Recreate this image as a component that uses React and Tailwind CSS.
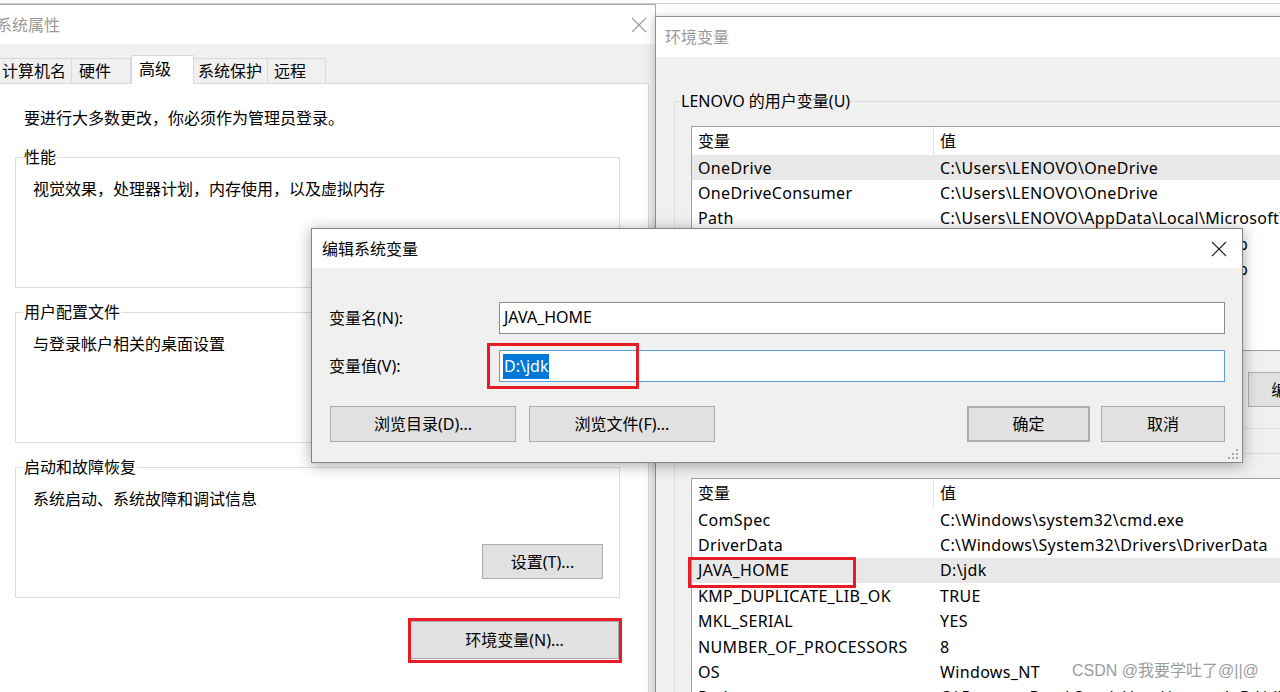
import React from "react";

// 用户变量 / 系统变量 rows
const userVars = [
  ["OneDrive", "C:\\Users\\LENOVO\\OneDrive", true],
  ["OneDriveConsumer", "C:\\Users\\LENOVO\\OneDrive"],
  ["Path", "C:\\Users\\LENOVO\\AppData\\Local\\Microsoft\\WindowsApps;"],
  ["TEMP", "C:\\Users\\LENOVO\\AppData\\Local\\Temp"],
  ["TMP", "C:\\Users\\LENOVO\\AppData\\Local\\Temp"],
  ["", ""],
  ["", ""],
  ["", ""],
];

const sysVars = [
  ["ComSpec", "C:\\Windows\\system32\\cmd.exe"],
  ["DriverData", "C:\\Windows\\System32\\Drivers\\DriverData"],
  ["JAVA_HOME", "D:\\jdk", true],
  ["KMP_DUPLICATE_LIB_OK", "TRUE"],
  ["MKL_SERIAL", "YES"],
  ["NUMBER_OF_PROCESSORS", "8"],
  ["OS", "Windows_NT"],
  ["Path", "C:\\ProgramData\\Oracle\\Java\\javapath;D:\\jdk\\bin"],
];

const CloseX = ({ color }) => (
  <svg width="16" height="16" viewBox="0 0 16 16" className="block">
    <path d="M1 1 L15 15 M15 1 L1 15" stroke={color} strokeWidth="1.1" fill="none" />
  </svg>
);

const WinButton = ({ children, className = "" }) => (
  <div
    className={
      "shrink-0 flex items-center justify-center border border-[#adadad] bg-[#e1e1e1] text-[16px] leading-[22px] text-black whitespace-nowrap " +
      className
    }
  >
    {children}
  </div>
);

const GroupBox = ({ label, text }) => (
  <fieldset className="border border-[#dcdcdc] pl-[7px] pr-[16px] pt-[10px] pb-[18px]">
    <legend className="px-[1px] leading-[22px]">{label}</legend>
    <div className="pl-[10px] leading-[22px]">{text}</div>
    <div className="flex justify-end mt-[34px]">
      <WinButton className="w-[121px] h-[35px]">设置(T)...</WinButton>
    </div>
  </fieldset>
);

const VarList = ({ rows, height }) => (
  <div className={"w-[640px] bg-white border border-[#a0a0a0] overflow-hidden " + height}>
    <div className="flex h-[28px] items-center">
      <div className="w-[242px] shrink-0 h-full pl-[6px] flex items-center border-r border-[#e5e5e5]">变量</div>
      <div className="pl-[6px]">值</div>
    </div>
    {rows.map(([name, value, selected], i) => (
      <div
        key={i}
        className={
          "flex h-[25.4px] items-center whitespace-nowrap tracking-[0.35px] " + (selected ? "bg-[#e8e8e8]" : "")
        }
      >
        <div className="w-[242px] shrink-0 pl-[6px]">{name}</div>
        <div className="pl-[6px]">{value}</div>
      </div>
    ))}
  </div>
);

export default function App() {
  return (
    <div className="relative w-[1280px] h-[692px] overflow-hidden bg-white text-black text-[16px] font-['Noto_Sans','Noto_Sans_CJK_SC',sans-serif]">
      {/* window edge behind everything */}
      <div className="h-[4px] border-b border-[#cfcfcf]" />

      {/* 系统属性 */}
      <div className="absolute left-[-10px] top-[4px] w-[666px] h-[700px] flex flex-col border border-[#aaaaaa] bg-[#f0f0f0]">
        <div className="shrink-0 h-[39px] flex items-center justify-between bg-white pl-[5px] pr-[8px]">
          <span className="text-[#9a9a9a] leading-[22px]">系统属性</span>
          <CloseX color="#9a9a9a" />
        </div>
        <div className="flex-1 flex flex-col pt-[11px] pl-[5px] pr-[6px]">
          <div className="shrink-0 flex items-end h-[28px]">
            <div className="w-[76px] h-[25px] pl-[5px] flex items-center border border-b-0 border-[#d9d9d9] bg-[#f0f0f0]">计算机名</div>
            <div className="w-[59px] h-[25px] pl-[7px] flex items-center border border-b-0 border-l-0 border-[#d9d9d9] bg-[#f0f0f0]">硬件</div>
            <div className="relative z-10 w-[63px] h-[29px] -mb-px pl-[7px] pb-[3px] flex items-center border border-b-0 border-[#d9d9d9] bg-white">高级</div>
            <div className="w-[74px] h-[25px] pl-[4px] flex items-center border border-b-0 border-l-0 border-[#d9d9d9] bg-[#f0f0f0]">系统保护</div>
            <div className="w-[58px] h-[25px] pl-[6px] flex items-center border border-b-0 border-l-0 border-[#d9d9d9] bg-[#f0f0f0]">远程</div>
          </div>
          <div className="flex-1 flex flex-col bg-white border border-[#d9d9d9] pt-[23px] pl-[18px] pr-[28px]">
            <div className="ml-[9px] leading-[22px]">要进行大多数更改，你必须作为管理员登录。</div>
            <div className="mt-[17px] flex flex-col gap-[13px]">
              <GroupBox label="性能" text="视觉效果，处理器计划，内存使用，以及虚拟内存" />
              <GroupBox label="用户配置文件" text="与登录帐户相关的桌面设置" />
              <GroupBox label="启动和故障恢复" text="系统启动、系统故障和调试信息" />
            </div>
            <div className="flex justify-end mt-[23px] pr-[1px]">
              <WinButton className="w-[209px] h-[38px]">环境变量(N)...</WinButton>
            </div>
          </div>
        </div>
      </div>

      {/* 环境变量 */}
      <div className="absolute left-[655px] top-[16px] w-[680px] h-[700px] flex flex-col border-l border-t border-[#8f8f8f] bg-[#f0f0f0] shadow-[-2px_0_8px_rgba(0,0,0,0.18)]">
        <div className="shrink-0 h-[40px] flex items-center bg-white pl-[9px]">
          <span className="text-[#9a9a9a] leading-[22px]">环境变量</span>
        </div>
        <div className="shrink-0 pl-[18px] pt-[33px]">
          <fieldset className="border border-[#dcdcdc] pl-[6px] pt-[14px] pb-[21px]">
            <legend className="leading-[22px]">LENOVO 的用户变量(U)</legend>
            <div className="pl-[10px]">
              <VarList rows={userVars} height="h-[225px]" />
              <div className="flex mt-[21px] ml-[444px] gap-[10px]">
                <WinButton className="w-[103px] h-[35px]">新建(N)...</WinButton>
                <WinButton className="w-[110px] h-[35px]">编辑(E)...</WinButton>
                <WinButton className="w-[103px] h-[35px]">删除(D)</WinButton>
              </div>
            </div>
          </fieldset>
          <fieldset className="mt-[13px] border border-[#dcdcdc] pl-[6px] pt-[14px] pb-[21px]">
            <legend className="leading-[22px]">系统变量(S)</legend>
            <div className="pl-[10px]">
              <VarList rows={sysVars} height="h-[260px]" />
            </div>
          </fieldset>
        </div>
      </div>

      {/* 编辑系统变量 */}
      <div className="absolute left-[311px] top-[228px] w-[932px] h-[235px] flex flex-col border border-[#858585] bg-[#f0f0f0] shadow-[0_2px_14px_rgba(0,0,0,0.35)]">
        <div className="shrink-0 h-[39px] flex items-center justify-between bg-white pl-[10px] pr-[15px]">
          <span className="leading-[22px]">编辑系统变量</span>
          <CloseX color="#222222" />
        </div>
        <div className="flex-1 flex flex-col pt-[34px] pl-[17px] pr-[17px]">
          <div className="flex items-center">
            <div className="w-[170px] shrink-0">变量名(N):</div>
            <div className="flex-1 h-[32px] flex items-center bg-white border border-[#8a8a8a] pl-[4px] pb-[3px]">JAVA_HOME</div>
          </div>
          <div className="flex items-center mt-[16px]">
            <div className="w-[170px] shrink-0">变量值(V):</div>
            <div className="flex-1 h-[32px] flex items-center bg-white border border-[#5a9fdc] pl-[3px]">
              <span className="bg-[#0078d7] text-white leading-[25px] px-[1px]">D:\jdk</span>
            </div>
          </div>
          <div className="flex items-center mt-[24px] pl-[1px]">
            <WinButton className="w-[186px] h-[36px]">浏览目录(D)...</WinButton>
            <WinButton className="w-[186px] h-[36px] ml-[13px]">浏览文件(F)...</WinButton>
            <div className="flex-1" />
            <WinButton className="w-[123px] h-[36px] border-2 border-[#0078d7]">确定</WinButton>
            <WinButton className="w-[124px] h-[36px] ml-[11px]">取消</WinButton>
          </div>
        </div>
        <svg width="12" height="12" viewBox="0 0 12 12" className="absolute right-[3px] bottom-[2px]">
          <g fill="#a8a8a8">
            <rect x="9" y="1" width="2" height="2" />
            <rect x="5" y="5" width="2" height="2" />
            <rect x="9" y="5" width="2" height="2" />
            <rect x="1" y="9" width="2" height="2" />
            <rect x="5" y="9" width="2" height="2" />
            <rect x="9" y="9" width="2" height="2" />
          </g>
        </svg>
      </div>

      {/* annotation boxes */}
      <div className="absolute left-[487px] top-[343px] w-[152px] h-[46px] border-[3px] border-[#e81c24]" />
      <div className="absolute left-[408px] top-[618px] w-[214px] h-[45px] border-[3px] border-[#e81c24]" />
      <div className="absolute left-[688px] top-[557px] w-[168px] h-[31px] border-[3px] border-[#e81c24]" />

      {/* watermark */}
      <div className="absolute left-[1072px] top-[660px] text-[16px] leading-[22px] text-[#9c9c9c] whitespace-nowrap font-['Liberation_Sans','Noto_Sans_CJK_SC',sans-serif]">
        CSDN @我要学吐了@||@
      </div>
    </div>
  );
}
